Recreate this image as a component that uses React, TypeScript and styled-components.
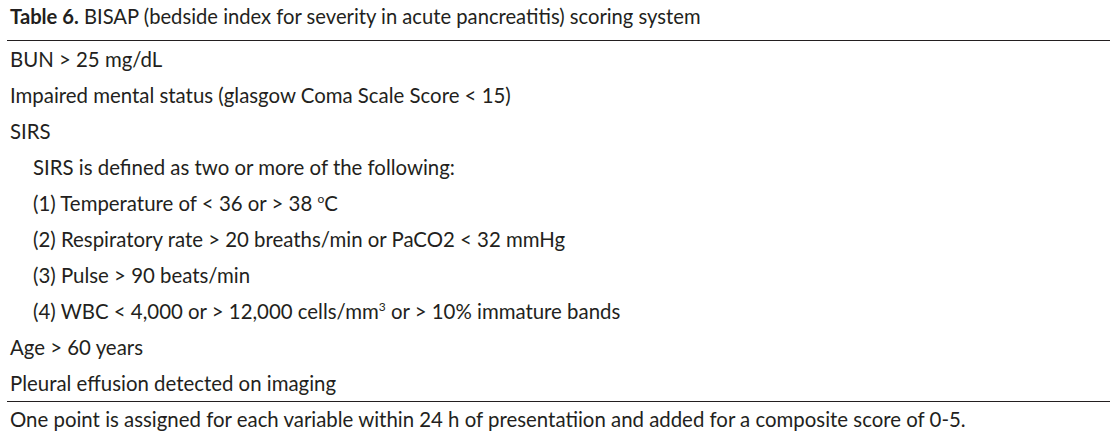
import React from 'react';
import styled, { createGlobalStyle } from 'styled-components';

const GlobalStyle = createGlobalStyle`
  html, body {
    margin: 0;
    padding: 0;
    background: #ffffff;
  }
  body {
    font-family: Lato, "Liberation Sans", sans-serif;
    color: #231f20;
  }
`;

const Page = styled.div`
  width: 1115px;
  height: 438px;
  padding: 0 5px 0 7px;
  box-sizing: border-box;
`;

const Caption = styled.div`
  height: 41px;
  padding: 3px 0 0 3px;
  box-sizing: border-box;
  font-size: 20.2px;
  line-height: 26px;
  border-bottom: 1.5px solid #231f20;

  b {
    font-weight: 700;
  }
`;

const Body = styled.div`
  display: flex;
  flex-direction: column;
  border-bottom: 1.5px solid #231f20;
`;

const Row = styled.div<{ $indent?: boolean }>`
  height: 36px;
  display: flex;
  align-items: center;
  padding-left: ${(p) => (p.$indent ? '26px' : '3px')};
  font-size: 20.4px;

  sup {
    font-size: 12px;
    line-height: 0;
    vertical-align: 8px;
  }
`;

const Footnote = styled.div`
  height: 34px;
  display: flex;
  align-items: center;
  padding-left: 3px;
  font-size: 20.4px;
`;

const rows: { text: React.ReactNode; indent?: boolean }[] = [
  { text: 'BUN > 25 mg/dL' },
  { text: 'Impaired mental status (glasgow Coma Scale Score < 15)' },
  { text: 'SIRS' },
  { text: 'SIRS is defined as two or more of the following:', indent: true },
  {
    text: (
      <>
        (1) Temperature of &lt; 36 or &gt; 38 <sup>o</sup>C
      </>
    ),
    indent: true,
  },
  { text: '(2) Respiratory rate > 20 breaths/min or PaCO2 < 32 mmHg', indent: true },
  { text: '(3) Pulse > 90 beats/min', indent: true },
  {
    text: (
      <>
        (4) WBC &lt; 4,000 or &gt; 12,000 cells/mm<sup>3</sup> or &gt; 10% immature bands
      </>
    ),
    indent: true,
  },
  { text: 'Age > 60 years' },
  { text: 'Pleural effusion detected on imaging' },
];

const App: React.FC = () => {
  return (
    <>
      <GlobalStyle />
      <Page>
        <Caption>
          <b>Table 6.</b> BISAP (bedside index for severity in acute pancreatitis) scoring system
        </Caption>
        <Body>
          {rows.map((r, i) => (
            <Row key={i} $indent={r.indent}>
              <span>{r.text}</span>
            </Row>
          ))}
        </Body>
        <Footnote>
          <span>
            One point is assigned for each variable within 24 h of presentatiion and added for a composite score of 0-5.
          </span>
        </Footnote>
      </Page>
    </>
  );
};

export default App;
